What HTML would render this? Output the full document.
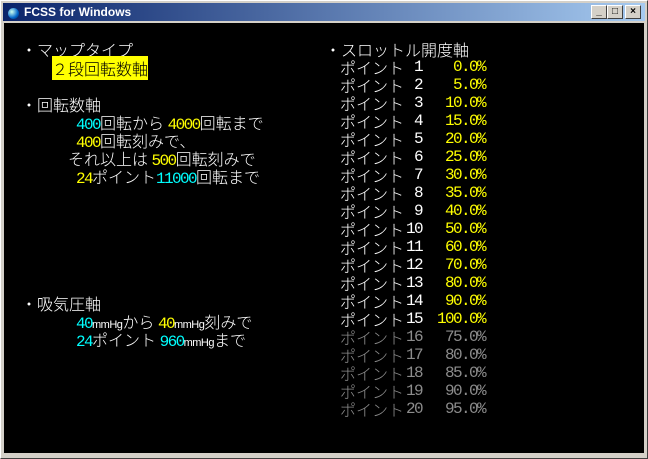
<!DOCTYPE html>
<html><head><meta charset="utf-8"><style>
*{margin:0;padding:0}
body{width:648px;height:459px;background:#d4d0c8;position:relative;overflow:hidden;font-family:"Noto Sans CJK JP","Liberation Sans",sans-serif}
.win{position:absolute;left:0;top:0;width:646px;height:457px;border:1px solid #fff;border-right-color:#404040;border-bottom-color:#404040}
.tb{position:absolute;left:3px;top:3px;width:642px;height:18px;background:linear-gradient(90deg,#0a246a,#a6caf0)}
.tb span{position:absolute;left:21px;top:1px;color:#fff;font:bold 12px "Liberation Sans",sans-serif;line-height:16px}
.ico{position:absolute;left:5px;top:5px;width:11px;height:11px;border-radius:50%;background:radial-gradient(circle at 35% 35%,#cfe,#06c 60%,#024)}
.btn{position:absolute;top:5px;width:16px;height:14px;background:#d4d0c8;border:1px solid #fff;border-right-color:#404040;border-bottom-color:#404040;box-sizing:border-box;font:bold 10px "Liberation Sans",sans-serif;text-align:center;line-height:12px;color:#000}
.cl{position:absolute;left:4px;top:23px;width:640px;height:430px;background:#000}
.l{position:absolute;white-space:pre;font-size:16px;line-height:18px;color:#fff;font-weight:300}
.a{font-family:"Liberation Mono",monospace;font-size:16px;letter-spacing:-1.6px;font-weight:normal}
.m{font-family:"Liberation Sans",sans-serif;font-size:11px;letter-spacing:-0.5px}
.c{color:#00ffff}.y{color:#ffff00}.g{color:#8c8c8c}
.yb{background:#ffff00;color:#000}
.r{position:absolute;white-space:pre;font-family:"Liberation Mono",monospace;font-size:16px;letter-spacing:-1.6px;line-height:18px;text-align:right}
</style></head><body>
<div class="win"></div>
<div class="tb"><div class="ico"></div><span>FCSS for Windows</span></div>
<div class="btn" style="left:591px">_</div>
<div class="btn" style="left:607px">□</div>
<div class="btn" style="left:625px">×</div>
<div class="cl"></div>

<div class="l" style="left:21px;top:40px">・マップタイプ</div>
<div class="l" style="left:52px;top:59px"><span class="yb">２段回転数軸</span></div>
<div class="l" style="left:21px;top:95px">・回転数軸</div>
<div class="l" style="left:76px;top:113px"><span class="a c">400</span>回転から <span class="a y">4000</span>回転まで</div>
<div class="l" style="left:76px;top:131px"><span class="a y">400</span>回転刻みで、</div>
<div class="l" style="left:68px;top:149px">それ以上は <span class="a y">500</span>回転刻みで</div>
<div class="l" style="left:76px;top:167px"><span class="a y">24</span>ポイント<span class="a c">11000</span>回転まで</div>
<div class="l" style="left:21px;top:294px">・吸気圧軸</div>
<div class="l" style="left:76px;top:312px"><span class="a c">40</span><span class="m">mmHg</span>から <span class="a y">40</span><span class="m">mmHg</span>刻みで</div>
<div class="l" style="left:76px;top:330px"><span class="a c">24</span>ポイント <span class="a c">960</span><span class="m">mmHg</span>まで</div>

<div class="l" style="left:325px;top:40px">・スロットル開度軸</div>

<div class="l" style="left:340px;top:58px">ポイント<br>ポイント<br>ポイント<br>ポイント<br>ポイント<br>ポイント<br>ポイント<br>ポイント<br>ポイント<br>ポイント<br>ポイント<br>ポイント<br>ポイント<br>ポイント<br>ポイント<br><span class="g">ポイント<br>ポイント<br>ポイント<br>ポイント<br>ポイント</span></div>
<div class="r" style="left:396px;top:58px;width:26px;color:#fff">1<br>2<br>3<br>4<br>5<br>6<br>7<br>8<br>9<br>10<br>11<br>12<br>13<br>14<br>15<br><span class="g">16<br>17<br>18<br>19<br>20</span></div>
<div class="r y" style="left:427px;top:58px;width:58px">0.0%<br>5.0%<br>10.0%<br>15.0%<br>20.0%<br>25.0%<br>30.0%<br>35.0%<br>40.0%<br>50.0%<br>60.0%<br>70.0%<br>80.0%<br>90.0%<br>100.0%<br><span class="g">75.0%<br>80.0%<br>85.0%<br>90.0%<br>95.0%</span></div>
</body></html>
